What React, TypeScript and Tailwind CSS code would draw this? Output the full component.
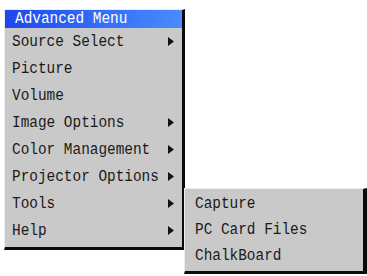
import React from "react";

const Arrow = () => (
  <svg width="6" height="9" viewBox="0 0 6 9" className="block shrink-0">
    <polygon points="0,0 6,4.5 0,9" fill="#111" />
  </svg>
);

const items: { label: string; arrow: boolean }[] = [
  { label: "Source Select", arrow: true },
  { label: "Picture", arrow: false },
  { label: "Volume", arrow: false },
  { label: "Image Options", arrow: true },
  { label: "Color Management", arrow: true },
  { label: "Projector Options", arrow: true },
  { label: "Tools", arrow: true },
  { label: "Help", arrow: true },
];

const sub = ["Capture", "PC Card Files", "ChalkBoard"];

const Label = ({ children }: { children: React.ReactNode }) => (
  <div className="flex-1 min-w-0">
    <span className="inline-block origin-left scale-x-[0.9] whitespace-pre">{children}</span>
  </div>
);

export default function App() {
  return (
    <div
      className="relative w-[367px] h-[276px] bg-white overflow-hidden"
      style={{ fontFamily: '"Liberation Mono", "DejaVu Sans Mono", monospace' }}
    >
      <div className="pl-[4px] pt-[9px]">
        <div className="w-[181px] bg-[#c9c9c9] border-l border-t border-l-[#ececec] border-t-[#ececec] border-r-[3px] border-b-[3px] border-r-[#0a0a0a] border-b-[#0a0a0a] pb-[3px]">
          <div className="h-[18px] flex items-center pl-[10px] bg-gradient-to-r from-[#1f46ee] to-[#4a8bff] text-white text-[16px] leading-none">
            <Label>Advanced Menu</Label>
          </div>
          {items.map((it) => (
            <div
              key={it.label}
              className="h-[27px] flex items-center pl-[7px] pr-[8px] text-[16px] text-[#1a1a1a] leading-none"
            >
              <Label>{it.label}</Label>
              {it.arrow && <Arrow />}
            </div>
          ))}
        </div>
      </div>
      <div className="absolute left-[184px] top-[188px] w-[183px] bg-[#c9c9c9] border-l border-t border-l-[#ececec] border-t-[#ececec] border-r-[4px] border-b-[3px] border-r-[#0a0a0a] border-b-[#0a0a0a] pt-[2px] pb-[2px]">
        {sub.map((s) => (
          <div
            key={s}
            className="h-[26px] flex items-center pl-[10px] text-[16px] text-[#1a1a1a] leading-none"
          >
            <Label>{s}</Label>
          </div>
        ))}
      </div>
    </div>
  );
}
